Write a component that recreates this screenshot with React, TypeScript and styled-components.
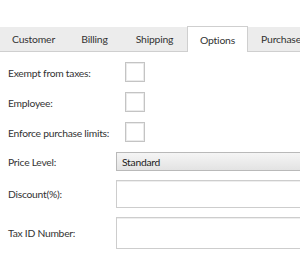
import styled, { createGlobalStyle } from "styled-components"

const Global = createGlobalStyle`
  html, body { margin: 0; padding: 0; background: #fff; }
  body { font-family: Lato, "Noto Sans", sans-serif; color: #333; }
`

const Page = styled.div`
  width: 300px;
  height: 265px;
  overflow: hidden;
  padding-top: 27px;
  box-sizing: border-box;
`

const TabBar = styled.div`
  display: flex;
  height: 24px;
  background: #ececec;
  border-bottom: 1px solid #cfcfcf;
  white-space: nowrap;
`

const Tab = styled.div<{ $active?: boolean; $w: number }>`
  flex: none;
  box-sizing: border-box;
  width: ${({ $w }) => $w}px;
  display: flex;
  justify-content: center;
  align-items: center;
  font-size: 10.4px;
  letter-spacing: -0.2px;
  color: #333;
  ${({ $active }) =>
    $active &&
    `
    background: #fff;
    border: 1px solid #cfcfcf;
    border-bottom: none;
    margin-top: -1px;
    height: 26px;
    padding-top: 1px;
  `}
`

const Form = styled.div`
  display: flex;
  flex-direction: column;
  gap: 9px;
  padding: 10px 0 0 8px;
`

const Row = styled.div<{ $h: number }>`
  display: grid;
  grid-template-columns: 108px 1fr;
  align-items: center;
  height: ${({ $h }) => $h}px;
`

const Label = styled.span`
  font-size: 10.3px;
  letter-spacing: -0.25px;
  white-space: nowrap;
  color: #333;
`

const Check = styled.div`
  width: 20px;
  height: 20px;
  box-sizing: border-box;
  margin-left: 9px;
  border: 1px solid #c4c4c4;
  box-shadow: inset 0 0 0 1px #ebebeb;
  background: #fff;
  align-self: start;
`

const Select = styled.div`
  height: 19px;
  box-sizing: border-box;
  width: 200px;
  border: 1px solid #b9b9b9;
  background: linear-gradient(#f5f5f5, #e3e3e3);
  font-size: 10.3px;
  letter-spacing: -0.25px;
  padding-left: 5px;
  display: flex;
  align-items: center;
  color: #222;
`

const Input = styled.div`
  height: 100%;
  box-sizing: border-box;
  width: 200px;
  border: 1px solid #cdcdcd;
  box-shadow: inset 0 1px 0 #eee;
  background: #fff;
`

const tabs: [string, number][] = [
  ["Customer", 67],
  ["Billing", 55],
  ["Shipping", 65],
  ["Options", 61],
  ["Purchase", 66],
]

export default function App() {
  return (
    <Page>
      <Global />
      <TabBar>
        {tabs.map(([t, w]) => (
          <Tab key={t} $w={w} $active={t === "Options"}>{t}</Tab>
        ))}
      </TabBar>
      <Form>
        <Row $h={21}><Label>Exempt from taxes:</Label><Check /></Row>
        <Row $h={21}><Label>Employee:</Label><Check /></Row>
        <Row $h={21}><Label>Enforce purchase limits:</Label><Check /></Row>
        <Row $h={19}><Label>Price Level:</Label><Select>Standard</Select></Row>
        <Row $h={28}><Label>Discount(%):</Label><Input /></Row>
        <Row $h={32}><Label>Tax ID Number:</Label><Input /></Row>
      </Form>
    </Page>
  )
}
